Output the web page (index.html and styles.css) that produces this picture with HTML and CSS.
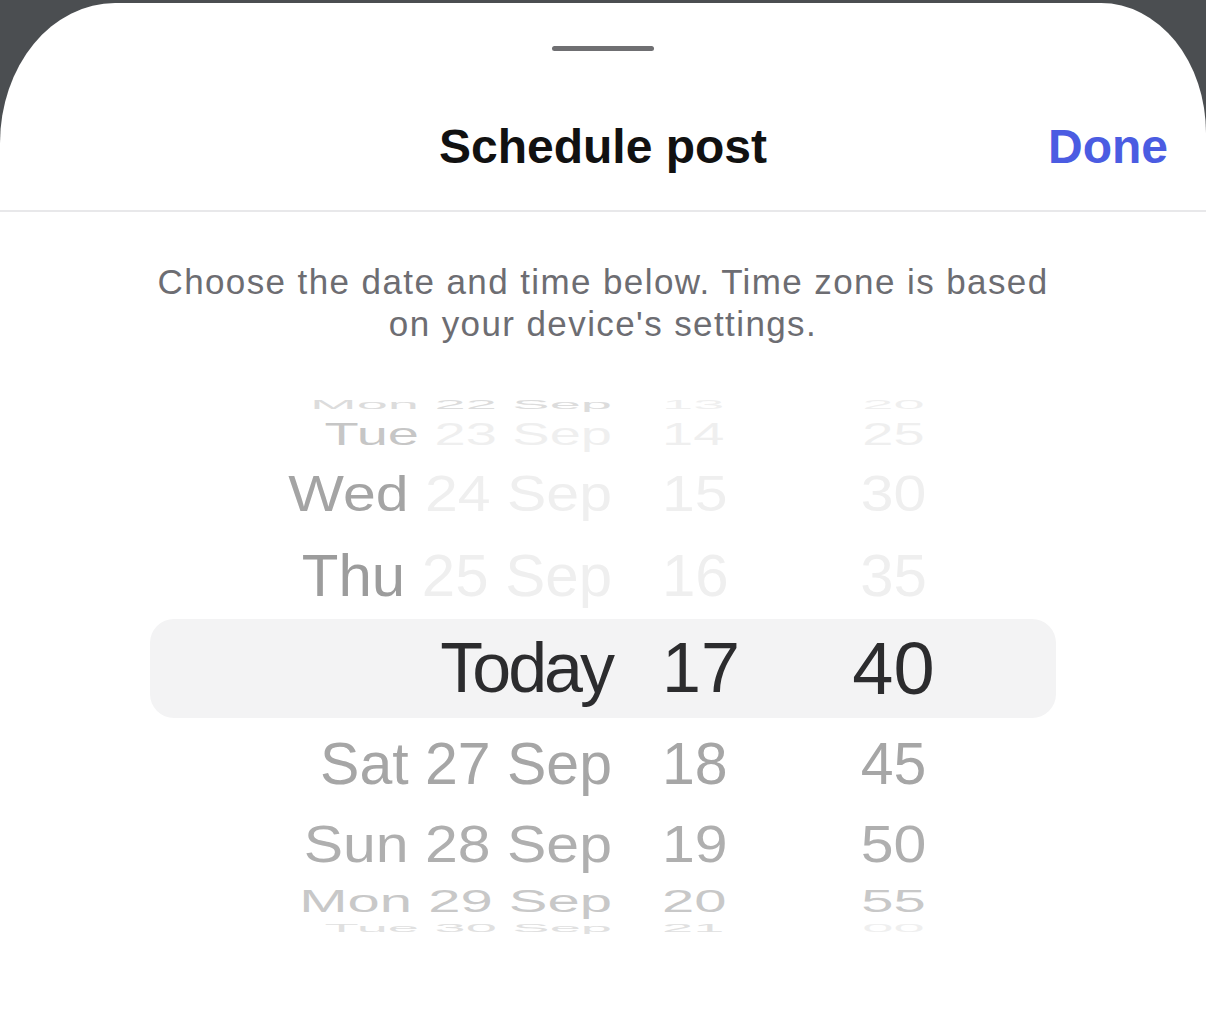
FILE: index.html
```html
<!DOCTYPE html>
<html lang="en">
<head>
    <meta charset="UTF-8">
    <meta name="viewport" content="width=device-width, initial-scale=1.0">
    <title>Schedule post</title>
    <link rel="stylesheet" href="styles.css">
</head>
<body>

    <div class="sheet">
        <div class="grabber"></div>

        <div class="header">
            <div></div>
            <h1 class="title">Schedule post</h1>
            <button class="done">Done</button>
        </div>

        <p class="hint">Choose the date and time below. Time zone is based<br>on your device's settings.</p>

        <div class="picker">
            <div class="row r-edge">
                <span class="date dim">Mon 22 Sep</span><span class="hour faint">13</span><span class="min faint">20</span>
            </div>
            <div class="row r-tue">
                <span class="date"><span class="day">Tue</span> <span class="faint">23 Sep</span></span><span class="hour faint">14</span><span class="min faint">25</span>
            </div>
            <div class="row r-wed">
                <span class="date"><span class="day">Wed</span> <span class="faint">24 Sep</span></span><span class="hour faint">15</span><span class="min faint">30</span>
            </div>
            <div class="row r-thu">
                <span class="date"><span class="day">Thu</span> <span class="faint">25 Sep</span></span><span class="hour faint">16</span><span class="min faint">35</span>
            </div>
            <div class="row r-now">
                <span class="date">Today</span><span class="hour">17</span><span class="min">40</span>
            </div>
            <div class="row r-sat">
                <span class="date">Sat 27 Sep</span><span class="hour">18</span><span class="min">45</span>
            </div>
            <div class="row r-sun">
                <span class="date">Sun 28 Sep</span><span class="hour">19</span><span class="min">50</span>
            </div>
            <div class="row r-mon">
                <span class="date">Mon 29 Sep</span><span class="hour">20</span><span class="min">55</span>
            </div>
            <div class="row r-last">
                <span class="date">Tue 30 Sep</span><span class="hour">21</span><span class="min faint">00</span>
            </div>
        </div>
    </div>

</body>
</html>
```

FILE: styles.css
```css
body {
    margin: 0;
    background: #4b4e51;
    font-family: "Liberation Sans", Arial, sans-serif;
    height: 100vh;
    overflow: hidden;
}

.sheet {
    margin-top: 3px;
    background: #fff;
    border-radius: 115px 105px 0 0 / 140px 130px 0 0;
    height: 1006px;
    display: flex;
    flex-direction: column;
}

.grabber {
    width: 102px;
    height: 5px;
    border-radius: 3px;
    background: #6f6f72;
    margin: 43px auto 0;
}

.header {
    display: grid;
    grid-template-columns: 1fr auto 1fr;
    align-items: center;
    padding: 68px 38px 35px;
    border-bottom: 2px solid #e8e8ea;
}

.title {
    margin: 0;
    font-size: 48px;
    line-height: 56px;
    font-weight: bold;
    color: #111;
}

.done {
    justify-self: end;
    background: none;
    border: none;
    padding: 0;
    font-family: inherit;
    font-size: 48px;
    line-height: 56px;
    font-weight: bold;
    color: #4b5ce2;
    cursor: pointer;
}

.hint {
    margin: 49px 0 0;
    text-align: center;
    font-size: 35px;
    line-height: 42px;
    letter-spacing: 1.4px;
    color: #6d6d72;
}

.picker {
    margin: 45px 150px 0;
}

.row {
    display: grid;
    grid-template-columns: 462px 170px 223px;
    align-items: center;
    white-space: nowrap;
    color: #a8a8a8;
}

.row > span {
    display: block;
}

.date {
    text-align: right;
}

.hour {
    padding-left: 50px;
}

.min {
    text-align: center;
}

.day {
    color: #a4a4a4;
}

.faint {
    color: #efefef;
}

.dim {
    color: #dcdcdc;
}

.r-edge {
    height: 30px;
    font-size: 56px;
    line-height: 30px;
}

.r-edge > span {
    transform: scaleY(0.22);
}

.r-tue {
    height: 30px;
    font-size: 56px;
    line-height: 30px;
}

.r-tue > span {
    transform: scaleY(0.55);
}

.r-tue .day {
    color: #c6c6c6;
}

.r-wed {
    height: 88px;
    font-size: 59px;
    line-height: 88px;
}

.r-wed > span {
    transform: scaleY(0.85);
}

.r-thu {
    height: 76px;
    font-size: 60px;
    line-height: 76px;
}

.r-thu .day {
    color: #9c9c9c;
}

.r-now {
    height: 99px;
    margin: 5px 0 4px;
    font-size: 70px;
    line-height: 99px;
    color: #2c2c2e;
    background: #f3f3f4;
    border-radius: 24px;
}

.r-now .date {
    letter-spacing: -3px;
}

.r-now .min {
    font-size: 74px;
}

.r-sat {
    height: 84px;
    font-size: 59px;
    line-height: 84px;
    color: #a6a6a6;
}

.r-sun {
    height: 78px;
    font-size: 59px;
    line-height: 78px;
    color: #afafaf;
}

.r-sun > span {
    transform: scaleY(0.87);
}

.r-mon {
    height: 34px;
    font-size: 58px;
    line-height: 34px;
    color: #c8c8c8;
}

.r-mon > span {
    transform: scaleY(0.55);
}

.r-last {
    height: 20px;
    font-size: 56px;
    line-height: 20px;
    color: #e0e0e0;
}

.r-last > span {
    transform: scaleY(0.2);
}
```
